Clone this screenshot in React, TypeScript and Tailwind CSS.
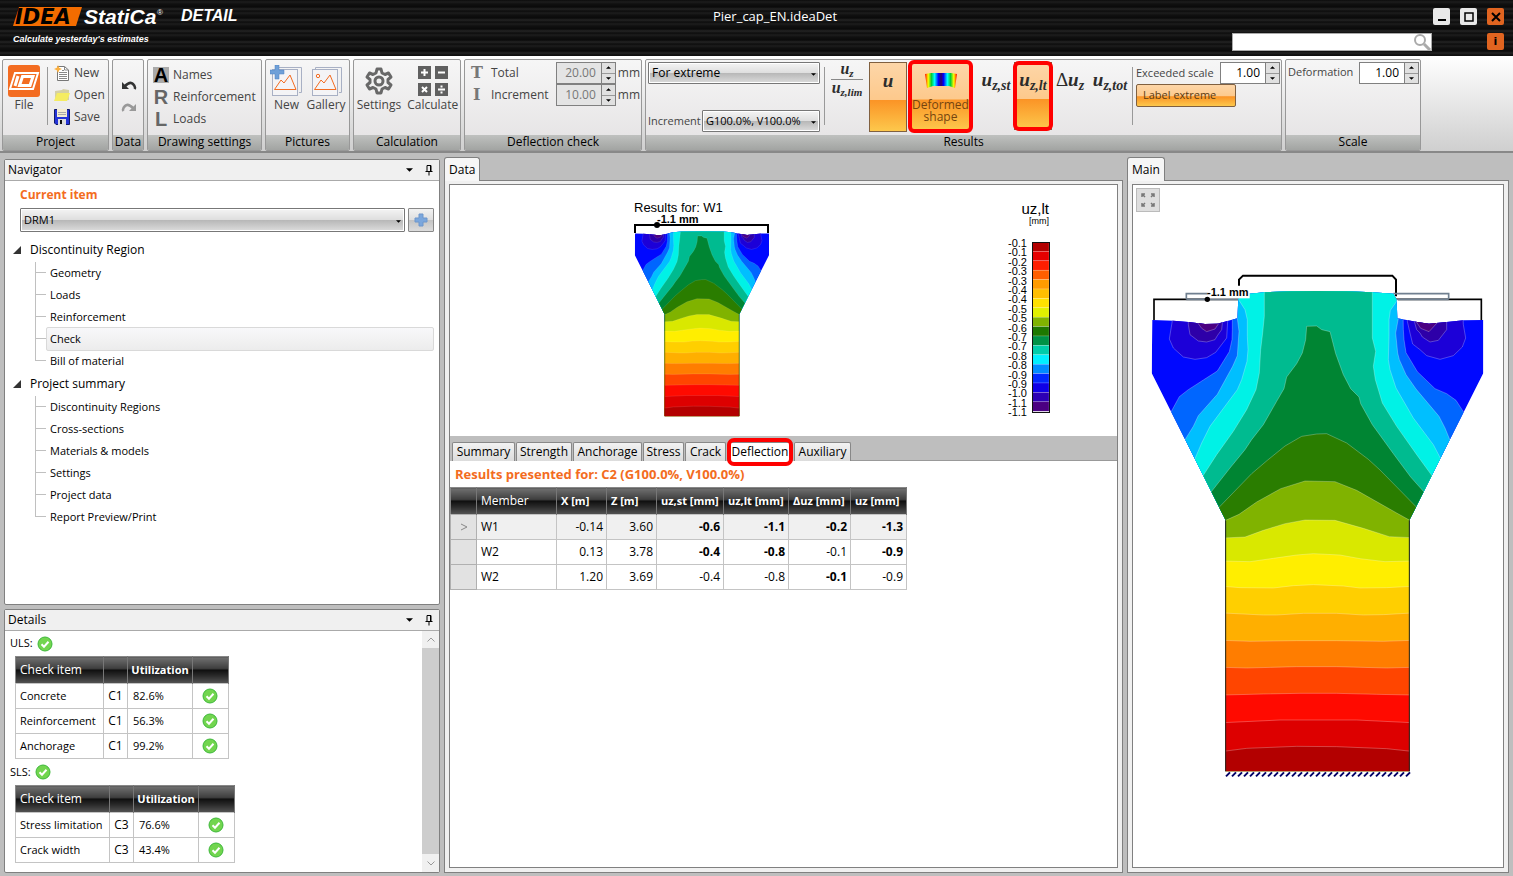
import type { ReactNode } from "react";

const BANDS: { fill: string; points: string }[] = [
  { fill: "#0066ff", points: "307,100 307,240 306,270 298,306 262,364 220,391 175,420 148,441 123,487 0,750 0,1700 1130,1700 1130,750 1002,489 978,452 950,432 915,417 862,366 828,309 822,270 820,240 818,100" },
  { fill: "#00bfff", points: "322,100 322,206 327,245 322,318 308,350 262,434 205,498 190,530 165,570 80,750 0,1700 1130,1700 1040,750 960,572 945,535 927,500 858,418 828,375 808,330 803,310 797,250 805,206 805,100" },
  { fill: "#00f2e6", points: "326,100 326,150 345,180 352,210 352,260 354,300 351,335 335,390 322,420 240,530 215,580 195,627 120,780 120,1700 1000,1700 1000,780 932,627 910,585 850,505 798,415 780,360 775,330 777,260 777,210 781,182 800,155 800,100" },
  { fill: "#00bb90", points: "403,100 403,200 398,250 392,300 388,370 378,420 350,480 310,545 260,615 220,677 150,800 150,1700 980,1700 980,800 905,677 860,615 800,530 757,460 736,390 730,350 737,305 727,265 727,100" },
  { fill: "#008533", points: "530,230 560,229 575,240 600,246 617,312 640,375 662,417 687,442 692,462 727,525 790,612 842,682 882,727 960,850 960,1700 170,1700 170,850 245,725 300,655 345,600 365,570 400,525 440,455 462,417 470,382 500,342 517,310 527,270" },
  { fill: "#2a7d00", points: "200,850 270,770 365,672 412,632 465,589 515,560 560,553 590,552 650,580 715,629 750,661 815,727 857,770 920,850 920,1700 200,1700" },
  { fill: "#80b300", points: "280,815 327,794 380,757 452,717 525,694 615,696 680,722 800,790 845,815 845,1700 280,1700" },
  { fill: "#d9e800", points: "280,865 345,862 400,842 465,822 525,811 615,812 700,836 778,861 845,864 845,1700 280,1700" },
  { fill: "#ffee00", points: "280,934 360,936 430,926 500,916 550,912 630,916 690,927 765,936 845,934 845,1700 280,1700" },
  { fill: "#ffcf00", points: "280,1010 330,1014 430,1015 490,1008 550,1005 640,1009 690,1015 770,1014 845,1010 845,1700 280,1700" },
  { fill: "#ffaf00", points: "280,1090 400,1096 440,1096 520,1091 620,1091 700,1096 760,1095 845,1090 845,1700 280,1700" },
  { fill: "#ff7d00", points: "280,1172 360,1175 500,1173 620,1173 760,1175 845,1172 845,1700 280,1700" },
  { fill: "#ff4500", points: "280,1253 350,1255 500,1251 620,1251 770,1255 845,1253 845,1700 280,1700" },
  { fill: "#ff0a00", points: "280,1336 400,1333 510,1331 620,1331 740,1334 845,1336 845,1700 280,1700" },
  { fill: "#dd0000", points: "280,1419 450,1411 680,1411 845,1419 845,1700 280,1700" },
  { fill: "#b30000", points: "280,1505 350,1496 500,1490 620,1491 770,1497 845,1505 845,1700 280,1700" },
  { fill: "#1c00d8", points: "127,190 127,213 118,268 130,295 160,322 195,329 230,324 257,308 290,265 293,215 293,190" },
  { fill: "#2e00a8", points: "175,190 175,225 180,255 205,274 230,277 255,270 262,258 275,240 280,190" },
  { fill: "#4b0082", points: "200,190 202,218 215,236 230,246 255,238 267,220 270,190" },
  { fill: "#1c00d8", points: "998,190 1000,225 1007,265 997,292 970,318 930,329 890,318 870,300 848,283 840,250 832,215 832,190" },
  { fill: "#2e00a8", points: "950,190 950,240 925,272 900,277 877,262 870,250 860,240 846,190" },
  { fill: "#4b0082", points: "925,190 923,218 897,246 872,236 860,218 858,190" },
];

const FULL_OUTLINE =
  "67,211 130,213 175,217 225,223 262,222 322,206 325,148 330,135 403,128 480,125 560,124 650,125 727,128 790,132 800,150 802,206 862,217 897,222 950,217 1000,212 1060,211 1060,370 838,812 838,1565 287,1565 287,812 65,370";
const WALL_OUTLINE =
  "67,211 130,213 175,217 225,223 262,222 340,204 403,197 560,194 727,197 790,204 862,217 897,222 950,217 1000,212 1060,211 1060,370 838,812 838,1565 287,1565 287,812 65,370";

function Contours({ id, outline }: { id: string; outline: string }) {
  return (
    <g>
      <clipPath id={id}>
        <polygon points={outline} />
      </clipPath>
      <g clipPath={`url(#${id})`}>
        <rect x="50" y="100" width="1030" height="1500" fill="#0008ff" />
        {BANDS.map((band, i) => (
          <polygon key={i} points={band.points} fill={band.fill} stroke="#fff" strokeOpacity="0.4" strokeWidth="2" />
        ))}
      </g>
      <path d="M287 812V1565M838 812V1565" stroke="#222" strokeWidth="3" />
    </g>
  );
}

function MainView() {
  return (
    <svg className="w-[335px] h-[510px] shrink-0" viewBox="60 70 1005 1530" fill="none">
      <path d="M327 108V90L339 78H787L798 90V140" stroke="#000" strokeWidth="6" />
      <path d="M72 211V149H1054V211" stroke="#000" strokeWidth="5" />
      <path d="M169 149V132H340M790 132H956V149M169 149H340M790 149H956" stroke="#708090" strokeWidth="5" />
      <rect x="324" y="152" width="480" height="60" fill="#fff" />
      <Contours id="main-outline" outline={FULL_OUTLINE} />
      <rect x="233" y="114" width="126" height="32" fill="#fff" />
      <circle cx="232" cy="149" r="8" fill="#000" />
      <text x="231" y="140" fill="#000" className="font-['Liberation_Sans',sans-serif] text-[33px] font-bold">-1.1 mm</text>
      {Array.from({ length: 31 }, (_, i) => (
        <path key={i} d={`M${288 + i * 18} 1580L${300 + i * 18} 1568`} stroke="#000066" strokeWidth="6" />
      ))}
    </svg>
  );
}

function ResultsPlot() {
  return (
    <svg className="w-[145px] h-[225px] shrink-0" viewBox="0 0 145 225" fill="none">
      <text x="4" y="11" fill="#000" className="font-['Liberation_Sans',sans-serif] text-[13px]">Results for: W1</text>
      <path d="M5 32V24H138V32" stroke="#000" strokeWidth="2" />
      <g transform="translate(-4 4) scale(0.135)">
        <Contours id="wall-outline" outline={WALL_OUTLINE} />
      </g>
      <circle cx="27" cy="24" r="3" fill="#000" />
      <text x="27" y="22" fill="#000" className="font-['Liberation_Sans',sans-serif] text-[11px] font-bold">-1.1 mm</text>
    </svg>
  );
}

const LEGEND_COLORS = [
  "#b30000", "#e60000", "#ff1e00", "#ff5f00", "#ff9b00", "#ffbe00", "#ffe100", "#e1f000", "#80b300",
  "#1e7800", "#009146", "#00cdaa", "#00f0ff", "#008cff", "#0028ff", "#0f00e6", "#2d00b4", "#4b0082",
];
const LEGEND_LABELS = [
  "-0.1", "-0.1", "-0.2", "-0.3", "-0.3", "-0.4", "-0.4", "-0.5", "-0.5", "-0.6",
  "-0.7", "-0.7", "-0.8", "-0.8", "-0.9", "-0.9", "-1.0", "-1.1", "-1.1",
];

function Legend() {
  return (
    <svg className="w-[50px] h-[220px] shrink-0" viewBox="0 0 50 220">
      <g className="font-['Liberation_Sans',sans-serif]" fill="#000" textAnchor="end">
        <text x="49" y="13" className="text-[15px]">uz,lt</text>
        <text x="49" y="23" className="text-[9px]">[mm]</text>
        {LEGEND_LABELS.map((label, i) => (
          <text key={i} x="27" y={46 + Math.round(i * 9.4)} className="text-[11px]">{label}</text>
        ))}
      </g>
      {LEGEND_COLORS.map((color, i) => (
        <rect key={color} x="32" y={41 + i * 9.4} width="17" height="9.4" fill={color} stroke="#fff" strokeOpacity="0.35" strokeWidth="0.5" />
      ))}
      <rect x="32.500" y="41.500" width="17" height="170" fill="none" stroke="#111" />
    </svg>
  );
}

function CheckIcon() {
  return (
    <svg className="w-4 h-4" viewBox="0 0 16 16" fill="none">
      <circle cx="8" cy="8" r="7" fill="#72d54f" stroke="#3db83a" />
      <path d="M4.500 8.200L7 10.700L11.500 5.800" stroke="#fff" strokeWidth="2" />
    </svg>
  );
}

function PlusIcon({ className }: { className: string }) {
  return (
    <svg className={className} viewBox="0 0 14 14">
      <path d="M5 1H9V5H13V9H9V13H5V9H1V5H5Z" fill="#7ba7dd" stroke="#6f97cc" />
    </svg>
  );
}

function DownArrow({ className }: { className: string }) {
  return (
    <svg className={className} viewBox="0 0 8 4">
      <path d="M0 0H8L4 4Z" fill="#000" />
    </svg>
  );
}

function PinIcon() {
  return (
    <svg className="w-2 h-3" viewBox="0 0 8 12" fill="none" stroke="#000">
      <path d="M2 7V1.500H6V7M5.500 1.500V7M0.500 7.500H7.500M4 8V11.500" />
    </svg>
  );
}

function FileLogo() {
  return (
    <svg className="w-8 h-8" viewBox="0 0 32 32">
      <rect width="32" height="32" rx="3" fill="#f36c21" />
      <path d="M7 8H30L25 24H2Z" fill="none" stroke="#fff" strokeWidth="2" />
      <path d="M10 11L7 21" stroke="#fff" strokeWidth="3" />
      <path d="M14.500 11.500H25L22 20.500H11.500Z" fill="none" stroke="#fff" strokeWidth="3" />
    </svg>
  );
}

function NewFileIcon() {
  return (
    <svg className="w-4 h-4" viewBox="0 0 16 16" fill="none">
      <path d="M3.500 1.500H10.500L14.500 5V15.500H3.500Z" fill="#fff" stroke="#777" />
      <path d="M10.500 1.500V5H14.500M5 7.500H13M5 9.500H13M5 11.500H13M5 13.500H13M8 5.500H10" stroke="#888" />
      <path d="M4 0L5.200 2.800L8 4L5.200 5.200L4 8L2.800 5.200L0 4L2.800 2.800Z" fill="#fbb040" />
    </svg>
  );
}

function OpenIcon() {
  return (
    <svg className="w-4 h-4" viewBox="0 0 16 16">
      <path d="M1 4L8 3L9 2L15 3V13L1 14Z" fill="#d5d0a4" />
      <path d="M3 6H16L13 14H0Z" fill="#f5ec62" />
    </svg>
  );
}

function SaveIcon() {
  return (
    <svg className="w-4 h-4" viewBox="0 0 16 16">
      <path d="M0.500 0.500H15.500V15.500H2L0.500 14Z" fill="#2433d8" stroke="#111a6a" />
      <rect x="3" y="0" width="10" height="8" fill="#f4ecd0" />
      <path d="M4 3.500H12M4 5.500H12" stroke="#aaa" />
      <rect x="4" y="10" width="8" height="6" fill="#ddd" />
      <rect x="6" y="11" width="2" height="4" fill="#111" />
    </svg>
  );
}

function UndoIcon({ color, flip }: { color: string; flip?: boolean }) {
  return (
    <svg className={flip ? "w-4 h-3 -scale-x-100" : "w-4 h-3"} viewBox="0 0 16 12" fill="none">
      <path d="M4 6Q9 1 12 4T13.500 9" stroke={color} strokeWidth="2.500" />
      <path d="M1 2V9H8Z" fill={color} />
    </svg>
  );
}

function PictureIcon({ plus }: { plus?: boolean }) {
  return (
    <svg className="w-8 h-8" viewBox="0 0 32 32" fill="none">
      <path d="M5.500 4V2.500H31.500V27.500H29" stroke="#a8b0c4" />
      <rect x="2.500" y="4.500" width="25" height="26" fill="#f4f4f6" stroke="#a8b0c4" />
      <path d="M4.500 24.500L11 15L14 18L20 10L26 24.500Z" stroke="#f36c21" />
      {plus ? (
        <path d="M5 0H9V5H14V9H9V14H5V9H0V5H5Z" fill="#6fa0d8" stroke="#4c80c0" strokeWidth="0.5" />
      ) : (
        <circle cx="8" cy="11" r="1.700" stroke="#f36c21" />
      )}
    </svg>
  );
}

function GearIcon() {
  return (
    <svg className="w-8 h-8" viewBox="0 0 32 32" fill="none" stroke="#686868" strokeWidth="3" strokeLinejoin="round">
      <path d="M14 4H18L19 8L22 9.500L25.500 8L28 12L25 14.500V17.500L28 20L25.500 24L22 22.500L19 24L18 28H14L13 24L10 22.500L6.500 24L4 20L7 17.500V14.500L4 12L6.500 8L10 9.500L13 8Z" />
      <circle cx="16" cy="16" r="4" />
    </svg>
  );
}

function CalculatorIcon() {
  return (
    <svg className="w-8 h-8" viewBox="0 0 32 32" fill="none">
      <path d="M1 1H14V14H1ZM18 1H31V14H18ZM1 18H14V31H1ZM18 18H31V31H18Z" fill="#606060" />
      <path d="M4 7.500H11M7.500 4V11M21 7.500H28M5 22L10 27M10 22L5 27M21 24.500H28M24.500 20.500V22.500M24.500 26.500V28.500" stroke="#fff" strokeWidth="2" />
    </svg>
  );
}

function ShapeIcon() {
  return (
    <svg className="w-8 h-4" viewBox="0 0 32 16">
      <defs>
        <linearGradient id="rainbow">
          <stop offset="0" stopColor="#f00" />
          <stop offset="0.1" stopColor="#ff0" />
          <stop offset="0.2" stopColor="#0c3" />
          <stop offset="0.3" stopColor="#0ff" />
          <stop offset="0.42" stopColor="#00f" />
          <stop offset="0.5" stopColor="#306" />
          <stop offset="0.58" stopColor="#00f" />
          <stop offset="0.7" stopColor="#0ff" />
          <stop offset="0.8" stopColor="#0c3" />
          <stop offset="0.9" stopColor="#ff0" />
          <stop offset="1" stopColor="#f00" />
        </linearGradient>
      </defs>
      <path d="M0 2L6 1H26L32 2L30 16L24 14H8L2 16Z" fill="url(#rainbow)" />
    </svg>
  );
}

function TitleBar() {
  return (
    <header className="h-14 shrink-0 bg-black bg-[repeating-linear-gradient(180deg,#0c0c0c_0px,#1d1d1d_2px,#101010_4px,#0a0a0a_7px,#242424_9px,#0e0e0e_11px)] text-white">
      <div className="flex h-8">
        <div className="flex w-[252px] pl-[13px] pt-[6px]">
          <svg className="w-[152px] h-[22px]" viewBox="0 0 152 22">
            <path d="M6 1H69L63 20H0Z" fill="#f36c00" />
            <text x="2" y="18" fill="#000" className="font-['DejaVu_Sans',sans-serif] text-[21px] font-bold italic">IDEA</text>
            <text x="71" y="18" fill="#fff" className="font-['Liberation_Sans',sans-serif] text-[21px] font-bold italic">StatiCa</text>
            <text x="144" y="9" fill="#fff" className="font-['Liberation_Sans',sans-serif] text-[8px]">®</text>
          </svg>
          <span className="pl-4 font-['Liberation_Sans',sans-serif] text-base leading-5 italic font-bold">DETAIL</span>
        </div>
        <h1 className="flex-1 text-center text-[13px] leading-8">Pier_cap_EN.ideaDet</h1>
        <div className="flex w-[215px] justify-end gap-[10px] pr-[9px] pt-2">
          <button aria-label="Minimize" className="flex w-[17px] h-[17px] items-center justify-center rounded-[2px] bg-[#e8e8e8]">
            <svg className="w-3 h-3" viewBox="0 0 12 12"><path d="M2 8H10V10H2Z" fill="#000" /></svg>
          </button>
          <button aria-label="Maximize" className="flex w-[17px] h-[17px] items-center justify-center rounded-[2px] bg-[#e8e8e8]">
            <svg className="w-3 h-3" viewBox="0 0 12 12"><path d="M2 2H10V10H2Z" fill="none" stroke="#000" strokeWidth="1.500" /></svg>
          </button>
          <button aria-label="Close" className="flex w-[17px] h-[17px] items-center justify-center rounded-[2px] bg-[#e06420]">
            <svg className="w-3 h-3" viewBox="0 0 12 12"><path d="M2 2L10 10M10 2L2 10" stroke="#000" strokeWidth="2" /></svg>
          </button>
        </div>
      </div>
      <div className="flex items-start pr-[9px] pl-[13px]">
        <span className="flex-1 font-['Liberation_Sans',sans-serif] text-[9px] leading-[14px] italic font-bold">Calculate yesterday's estimates</span>
        <div className="relative mt-px mr-[55px] h-[18px] w-[200px] bg-white">
          <input aria-label="Search" className="block h-full w-full border border-[#aaa] px-1 text-xs text-black" />
          <svg className="absolute right-0 top-0 w-[18px] h-[18px]" viewBox="0 0 18 18" fill="none" stroke="#aaa" strokeWidth="2">
            <circle cx="6" cy="7" r="5" />
            <path d="M10 11L16 17" strokeWidth="3" />
          </svg>
        </div>
        <button aria-label="Information" className="mt-px w-[17px] h-[17px] rounded-[2px] bg-[#e06420] font-['DejaVu_Sans',sans-serif] text-[11px] leading-4 font-bold text-black">i</button>
      </div>
    </header>
  );
}

function RibbonGroup({ title, width, children }: { title: string; width: string; children: ReactNode }) {
  return (
    <section className={`flex h-[92px] shrink-0 flex-col overflow-hidden rounded-[2px] border border-[#989898] bg-linear-to-b from-[#f6f6f6] to-[#e4e2e3] ${width}`}>
      <div className="flex min-h-0 flex-1 pl-px">{children}</div>
      <h2 className="h-[15px] bg-linear-to-b from-[#bfc1bf] to-[#a2a4a2] text-center text-[12px] leading-[14px] text-black">{title}</h2>
    </section>
  );
}

function SmallCommand({ icon, label }: { icon: ReactNode; label: string }) {
  return (
    <button className="flex h-[22px] items-center gap-1 text-left">
      {icon}
      <span>{label}</span>
    </button>
  );
}

function LetterIcon({ letter, active }: { letter: string; active?: boolean }) {
  return (
    <span className={`h-4 w-4 text-center font-['Liberation_Sans',sans-serif] text-[20px] leading-4 font-bold ${active ? "bg-[#aaa] text-black" : "text-[#666]"}`}>
      {letter}
    </span>
  );
}

function LargeCommand({ icon, label }: { icon: ReactNode; label: string }) {
  return (
    <button className="flex flex-col items-center gap-px pt-[5px]">
      {icon}
      <span className="leading-[14px]">{label}</span>
    </button>
  );
}

function NumberBox({ id, value, disabled }: { id: string; value: string; disabled?: boolean }) {
  return (
    <div className={`flex h-[22px] w-[60px] shrink-0 border border-[#808080] ${disabled ? "bg-[#e4e4e4] text-[#777]" : "bg-white text-black"}`}>
      <input id={id} defaultValue={value} disabled={disabled} className="w-0 flex-1 pr-[5px] text-right text-xs" />
      <div className="flex w-[14px] flex-col border-l border-[#808080] bg-[#e0e0e0]">
        <button aria-label="Increase" className="flex flex-1 items-center justify-center border-b border-[#999]">
          <DownArrow className="h-[3px] w-[5px] rotate-180" />
        </button>
        <button aria-label="Decrease" className="flex flex-1 items-center justify-center">
          <DownArrow className="h-[3px] w-[5px]" />
        </button>
      </div>
    </div>
  );
}

function ComboBox({ id, label, value, className }: { id: string; label?: string; value: string; className: string }) {
  return (
    <div className={`relative ${className}`}>
      <select
        id={id}
        aria-label={label}
        className="block h-full w-full appearance-none rounded-[1px] border border-[#777] bg-[linear-gradient(180deg,#f4f4f4_0%,#dedede_50%,#b8b8b8_52%,#dcdcdc_100%)] pl-[3px] text-black shadow-[inset_0_0_0_1px_#fff]"
      >
        <option>{value}</option>
      </select>
      <DownArrow className="pointer-events-none absolute top-1/2 right-[4px] h-[3px] w-[5px]" />
    </div>
  );
}

function MathSymbol({ base, sub, prefix }: { base: string; sub?: string; prefix?: string }) {
  return (
    <span className="font-['Liberation_Serif',serif] text-[19px] leading-5 font-bold whitespace-nowrap text-[#2c2c2c] italic">
      {prefix && <span className="font-normal not-italic">{prefix}</span>}
      {base}
      {sub && <sub className="text-[14px]">{sub}</sub>}
    </span>
  );
}

const TOGGLED = "border border-[#806040] bg-[linear-gradient(180deg,#fdd6a8_0%,#fdc98c_54%,#fb9426_55%,#fdc84c_100%)]";

function Ribbon() {
  return (
    <div className="flex h-[97px] shrink-0 gap-[3px] border-b-2 border-[#888] bg-linear-to-b from-white to-[#cfcfcf] pt-[3px] pl-[2px] text-xs text-[#444]">
      <RibbonGroup title="Project" width="w-[107px]">
        <div className="ml-1 w-8">
          <LargeCommand icon={<FileLogo />} label="File" />
        </div>
        <div className="mt-[7px] ml-[7px] h-[58px] w-px bg-[#999]" />
        <div className="ml-[6px] flex flex-col pt-[2px]">
          <SmallCommand icon={<NewFileIcon />} label="New" />
          <SmallCommand icon={<OpenIcon />} label="Open" />
          <SmallCommand icon={<SaveIcon />} label="Save" />
        </div>
      </RibbonGroup>
      <RibbonGroup title="Data" width="w-[32px]">
        <div className="flex flex-1 flex-col items-center gap-[10px] pt-5">
          <button aria-label="Undo" className="h-3"><UndoIcon color="#333" /></button>
          <button aria-label="Redo" className="h-3"><UndoIcon color="#999" flip /></button>
        </div>
      </RibbonGroup>
      <RibbonGroup title="Drawing settings" width="w-[115px]">
        <div className="ml-1 flex flex-col pt-1">
          <SmallCommand icon={<LetterIcon letter="A" active />} label="Names" />
          <SmallCommand icon={<LetterIcon letter="R" />} label="Reinforcement" />
          <SmallCommand icon={<LetterIcon letter="L" />} label="Loads" />
        </div>
      </RibbonGroup>
      <RibbonGroup title="Pictures" width="w-[85px]">
        <div className="flex flex-1 items-start justify-center gap-1">
          <LargeCommand icon={<PictureIcon plus />} label="New" />
          <LargeCommand icon={<PictureIcon />} label="Gallery" />
        </div>
      </RibbonGroup>
      <RibbonGroup title="Calculation" width="w-[108px]">
        <div className="flex flex-1 items-start justify-center gap-[6px]">
          <LargeCommand icon={<GearIcon />} label="Settings" />
          <LargeCommand icon={<CalculatorIcon />} label="Calculate" />
        </div>
      </RibbonGroup>
      <RibbonGroup title="Deflection check" width="w-[178px]">
        <div className="flex flex-1 flex-col pt-[2px]">
          <div className="flex h-[22px] items-center pl-[5px]">
            <span className="w-5 font-['DejaVu_Serif',serif] text-base leading-5 font-bold text-[#777]">T</span>
            <label htmlFor="total" className="flex-1">Total</label>
            <NumberBox id="total" value="20.00" disabled />
            <span className="pr-px pl-[2px]">mm</span>
          </div>
          <div className="flex h-[22px] items-center pl-[5px]">
            <span className="w-5 pl-[2px] font-['DejaVu_Serif',serif] text-base leading-5 font-bold text-[#777]">I</span>
            <label htmlFor="increment" className="flex-1">Increment</label>
            <NumberBox id="increment" value="10.00" disabled />
            <span className="pr-px pl-[2px]">mm</span>
          </div>
        </div>
      </RibbonGroup>
      <RibbonGroup title="Results" width="w-[637px]">
        <div className="ml-px flex w-[172px] flex-col justify-between pt-[2px] pb-[3px]">
          <ComboBox id="result-kind" label="Result kind" value="For extreme" className="h-[22px] w-full" />
          <div className="flex items-center justify-between text-[11px]">
            <label htmlFor="load-step">Increment</label>
            <ComboBox id="load-step" value="G100.0%, V100.0%" className="h-[22px] w-[118px] shrink-0" />
          </div>
        </div>
        <div className="mt-[7px] ml-1 h-[58px] w-px bg-[#999]" />
        <button className="mt-[2px] ml-1 flex w-9 flex-col items-center font-['Liberation_Serif',serif] text-base leading-[18px] font-bold text-[#2c2c2c] italic">
          <span className="h-[17px] leading-[13px]">u<sub className="text-[11px]">z</sub></span>
          <span className="w-8 border-b border-[#888]" />
          <span className="leading-4 whitespace-nowrap">u<sub className="text-[11px]">z,lim</sub></span>
        </button>
        <button aria-pressed="true" className={`mt-[2px] ml-1 flex h-[70px] w-[38px] justify-center pt-2 ${TOGGLED}`}>
          <MathSymbol base="u" />
        </button>
        <button aria-pressed="true" className={`relative mt-[2px] ml-[3px] flex h-[69px] w-[61px] flex-col items-center pt-[9px] leading-3 text-[#75440f] ${TOGGLED}`}>
          <ShapeIcon />
          <span className="pt-[11px]">Deformed shape</span>
          <span className="absolute -inset-[3px] rounded-[6px] border-4 border-[#f00]" />
        </button>
        <button className="mt-[2px] ml-[7px] flex w-[36px] justify-center pt-2"><MathSymbol base="u" sub="z,st" /></button>
        <button aria-pressed="true" className={`relative mt-[2px] flex h-[68px] w-[38px] justify-center pt-[7px] ${TOGGLED}`}>
          <MathSymbol base="u" sub="z,lt" />
          <span className="absolute -inset-[2px] rounded-[6px] border-4 border-[#f00]" />
        </button>
        <button className="mt-[2px] ml-1 flex w-[28px] justify-center pt-2"><MathSymbol prefix="Δ" base="u" sub="z" /></button>
        <button className="mt-[2px] ml-[9px] flex w-[34px] justify-center pt-2"><MathSymbol base="u" sub="z,tot" /></button>
        <div className="mt-[7px] ml-[5px] h-[58px] w-px bg-[#999]" />
        <div className="ml-[3px] flex flex-1 flex-col items-start pt-[2px] pr-px text-[11px]">
          <div className="flex w-full items-center justify-between">
            <label htmlFor="exceeded" className="whitespace-nowrap">Exceeded scale</label>
            <NumberBox id="exceeded" value="1.00" />
          </div>
          <button aria-pressed="true" className={`h-[23px] w-[100px] rounded-[2px] pl-[6px] text-left text-[#5a3a10] ${TOGGLED}`}>Label extreme</button>
        </div>
      </RibbonGroup>
      <RibbonGroup title="Scale" width="w-[136px]">
        <div className="flex flex-1 items-start justify-between pt-[2px] pr-px pl-px">
          <label htmlFor="deformation" className="text-[11px] leading-5">Deformation</label>
          <NumberBox id="deformation" value="1.00" />
        </div>
      </RibbonGroup>
    </div>
  );
}

function Panel({ title, className, children }: { title: string; className: string; children: ReactNode }) {
  return (
    <section className={`flex flex-col rounded-[2px] border border-[#808080] bg-white ${className}`}>
      <div className="flex h-[21px] shrink-0 items-center border-b border-[#aaa] bg-[#f0f0f0] pr-[6px] pl-[3px]">
        <h2 className="flex-1 text-xs">{title}</h2>
        <button aria-label={`${title} menu`} className="mr-3"><DownArrow className="h-1 w-[7px]" /></button>
        <button aria-label={`Pin ${title}`}><PinIcon /></button>
      </div>
      {children}
    </section>
  );
}

const TREE = [
  { label: "Discontinuity Region", items: ["Geometry", "Loads", "Reinforcement", "Check", "Bill of material"] },
  {
    label: "Project summary",
    items: ["Discontinuity Regions", "Cross-sections", "Materials & models", "Settings", "Project data", "Report Preview/Print"],
  },
];

function Navigator() {
  return (
    <Panel title="Navigator" className="min-h-0 flex-1">
      <h3 className="pt-[5px] pl-[15px] text-[12px] leading-[18px] font-bold text-[#f36c21]">Current item</h3>
      <div className="mt-1 flex gap-[3px] pr-[5px] pl-[15px] text-[11px]">
        <ComboBox id="current-item" label="Current item" value="DRM1" className="h-6 flex-1" />
        <button aria-label="Add item" className="flex h-6 w-[26px] items-center justify-center rounded-[1px] border border-[#888] bg-[linear-gradient(180deg,#f2f2f2_0%,#dedede_50%,#c4c4c4_52%,#dcdcdc_100%)]">
          <PlusIcon className="h-[14px] w-[14px]" />
        </button>
      </div>
      <ul className="pt-[6px] pr-[5px] text-[11px]">
        {TREE.map((node) => (
          <li key={node.label}>
            <div className="flex h-6 items-center gap-[9px] pl-2 text-[12px]">
              <svg className="h-2 w-2" viewBox="0 0 8 8"><path d="M8 0V8H0Z" fill="#333" /></svg>
              {node.label}
            </div>
            <ul>
              {node.items.map((item, i) => (
                <li key={item} className="flex h-[22px] pl-[30px]">
                  <span className="flex w-[11px] flex-col">
                    <span className="h-[11px] border-b border-l border-[#c0c0c0]" />
                    <span className={i < node.items.length - 1 ? "flex-1 border-l border-[#c0c0c0]" : "flex-1"} />
                  </span>
                  <a
                    href="#"
                    className={
                      item === "Check"
                        ? "-my-px flex-1 rounded-[2px] border border-[#d9d9d9] bg-linear-to-b from-[#f8f8fa] to-[#ececec] pl-[3px] leading-[22px]"
                        : "flex-1 pl-1 leading-[22px]"
                    }
                  >
                    {item}
                  </a>
                </li>
              ))}
            </ul>
          </li>
        ))}
      </ul>
    </Panel>
  );
}

const HEAD = "border-r border-[#777] bg-[linear-gradient(180deg,#707070_0%,#3c3c3c_44%,#0c0c0c_46%,#2a2a2a_70%,#555_100%)] text-white";

function CheckTable({ rows, combo, width }: { rows: [string, string][]; combo: string; width: string }) {
  return (
    <table className={`ml-[10px] table-fixed border-collapse border border-[#888] text-xs ${width}`}>
      <thead>
        <tr className="h-[27px]">
          <th className={`pl-1 text-left font-normal ${HEAD}`}>Check item</th>
          <th className={`w-6 ${HEAD}`} />
          <th className={`w-[65px] text-center text-[11px] font-bold ${HEAD}`}>Utilization</th>
          <th className={`w-9 ${HEAD}`} />
        </tr>
      </thead>
      <tbody>
        {rows.map(([name, value]) => (
          <tr key={name} className="h-[25px]">
            <td className="border border-[#c4c4c4] pl-1 text-[11px] whitespace-nowrap">{name}</td>
            <td className="border border-[#c4c4c4] text-center">{combo}</td>
            <td className="border border-[#c4c4c4] pl-[5px] text-[11px]">{value}</td>
            <td className="border border-[#c4c4c4] pl-[9px]"><CheckIcon /></td>
          </tr>
        ))}
      </tbody>
    </table>
  );
}

function Details() {
  return (
    <Panel title="Details" className="h-[264px] shrink-0">
      <div className="flex min-h-0 flex-1 justify-between">
        <div>
          <div className="flex h-[25px] items-center gap-1 pl-[5px] text-[11px]">ULS: <CheckIcon /></div>
          <CheckTable combo="C1" width="w-[214px]" rows={[["Concrete", "82.6%"], ["Reinforcement", "56.3%"], ["Anchorage", "99.2%"]]} />
          <div className="flex h-[26px] items-center gap-1 pl-[5px] text-[11px]">SLS: <CheckIcon /></div>
          <CheckTable combo="C3" width="w-[220px]" rows={[["Stress limitation", "76.6%"], ["Crack width", "43.4%"]]} />
        </div>
        <div className="flex w-[17px] flex-col items-center bg-[#f0f0f0]">
          <svg className="h-[17px] w-2" viewBox="0 0 8 17" fill="none" stroke="#999"><path d="M0.500 10.500L4 7L7.500 10.500" /></svg>
          <div className="w-full flex-1 bg-[#cdcdcd]" />
          <svg className="h-[18px] w-2" viewBox="0 0 8 17" fill="none" stroke="#999"><path d="M0.500 7L4 10.500L7.500 7" /></svg>
        </div>
      </div>
    </Panel>
  );
}

function Document({ title, className, children }: { title: string; className: string; children: ReactNode }) {
  return (
    <section className={`flex flex-col ${className}`}>
      <button className="z-10 -mb-px h-6 self-start rounded-t-[3px] border border-b-0 border-[#808080] bg-[#f6f6f6] px-1 text-xs">{title}</button>
      <div className="flex min-h-0 flex-1 border border-[#808080] bg-[#f0f0f0] p-1 pt-[3px]">
        <div className="flex min-w-0 flex-1 flex-col border border-[#808080] bg-white">{children}</div>
      </div>
    </section>
  );
}

const TABS = [
  { label: "Summary", width: "w-[63px]" },
  { label: "Strength", width: "w-[56px]" },
  { label: "Anchorage", width: "w-[69px]" },
  { label: "Stress", width: "w-[41px]" },
  { label: "Crack", width: "w-[41px]" },
  { label: "Deflection", width: "w-[66px]" },
  { label: "Auxiliary", width: "w-[57px]" },
];

const COLUMNS = [
  { label: "Member", width: "w-[80px]" },
  { label: "X [m]", width: "w-[50px]" },
  { label: "Z [m]", width: "w-[50px]" },
  { label: "uz,st [mm]", width: "w-[67px]" },
  { label: "uz,lt [mm]", width: "w-[65px]" },
  { label: "Δuz [mm]", width: "w-[62px]" },
  { label: "uz [mm]", width: "w-[56px]" },
];

const RESULTS = [
  { cells: ["W1", "-0.14", "3.60", "-0.6", "-1.1", "-0.2", "-1.3"], bold: [3, 4, 5, 6] },
  { cells: ["W2", "0.13", "3.78", "-0.4", "-0.8", "-0.1", "-0.9"], bold: [3, 4, 6] },
  { cells: ["W2", "1.20", "3.69", "-0.4", "-0.8", "-0.1", "-0.9"], bold: [5] },
];

function DataView() {
  return (
    <Document title="Data" className="min-w-0 flex-1">
      <div className="flex h-[251px] shrink-0 items-start justify-between pt-4 pr-[67px] pl-[180px]">
        <ResultsPlot />
        <Legend />
      </div>
      <div className="flex h-[25px] shrink-0 gap-px bg-[#bebebe] pt-[6px] pl-[2px]">
        {TABS.map((tab) => (
          <button
            key={tab.label}
            className={`relative rounded-t-[2px] border border-b-0 border-[#888] text-center text-xs whitespace-nowrap ${tab.width} ${
              tab.label === "Deflection" ? "z-10 bg-white" : "bg-linear-to-b from-[#f2f2f2] to-[#dcdcdc]"
            }`}
          >
            {tab.label}
            {tab.label === "Deflection" && <span className="absolute -inset-x-px -top-[5px] -bottom-[5px] rounded-[7px] border-4 border-[#f00]" />}
          </button>
        ))}
        <span className="-ml-px flex-1 self-end border-b border-[#999]" />
      </div>
      <h3 className="pl-[5px] pt-1 pb-1 text-[13px] leading-[18px] font-bold text-[#f36c21]">Results presented for: C2 (G100.0%, V100.0%)</h3>
      <table className="w-[456px] table-fixed border-collapse border border-[#888] text-xs">
        <thead>
          <tr className="h-[27px]">
            <th className={`w-[26px] ${HEAD}`} />
            {COLUMNS.map((column, i) => (
              <th key={column.label} className={`pl-1 text-left whitespace-nowrap ${column.width} ${i === 0 ? "font-normal" : "text-[11px] font-bold"} ${HEAD}`}>
                {column.label}
              </th>
            ))}
          </tr>
        </thead>
        <tbody>
          {RESULTS.map((row, r) => (
            <tr key={r} className={r === 0 ? "h-[25px] bg-[#f0f0f0]" : "h-[25px]"}>
              <td className="border border-[#b0b0b0] bg-[#e2e2e2]">
                {r === 0 && <svg className="mx-auto h-2 w-2" viewBox="0 0 8 8" fill="none" stroke="#888"><path d="M1 1L7 4L1 7" /></svg>}
              </td>
              {row.cells.map((cell, i) => (
                <td key={i} className={`border border-[#c4c4c4] pr-[3px] pl-1 ${i > 0 ? "text-right" : ""} ${row.bold.includes(i) ? "font-bold" : ""}`}>
                  {cell}
                </td>
              ))}
            </tr>
          ))}
        </tbody>
      </table>
    </Document>
  );
}

function MainPanel() {
  return (
    <Document title="Main" className="w-[382px] shrink-0">
      <button aria-label="Fit to window" className="mt-[3px] ml-[3px] h-6 w-6 shrink-0 border border-[#bbb] bg-[#dedede]">
        <svg className="h-[22px] w-[22px]" viewBox="0 0 22 22" fill="none" stroke="#777" strokeWidth="1.500">
          <path d="M8 8L5 5M5 8V5H8M14 8L17 5M14 5H17V8M8 14L5 17M5 14V17H8M14 14L17 17M17 14V17H14" />
        </svg>
      </button>
      <div className="flex justify-center pt-[61px] pr-[2px]">
        <MainView />
      </div>
    </Document>
  );
}

export default function App() {
  return (
    <div className="flex h-screen flex-col overflow-hidden bg-[#bebebe] font-['Open_Sans',sans-serif] text-black">
      <TitleBar />
      <Ribbon />
      <main className="flex min-h-0 flex-1 gap-1 px-1 pt-1 pb-[3px]">
        <div className="flex w-[436px] shrink-0 flex-col gap-1 pt-[2px]">
          <Navigator />
          <Details />
        </div>
        <DataView />
        <MainPanel />
      </main>
    </div>
  );
}
